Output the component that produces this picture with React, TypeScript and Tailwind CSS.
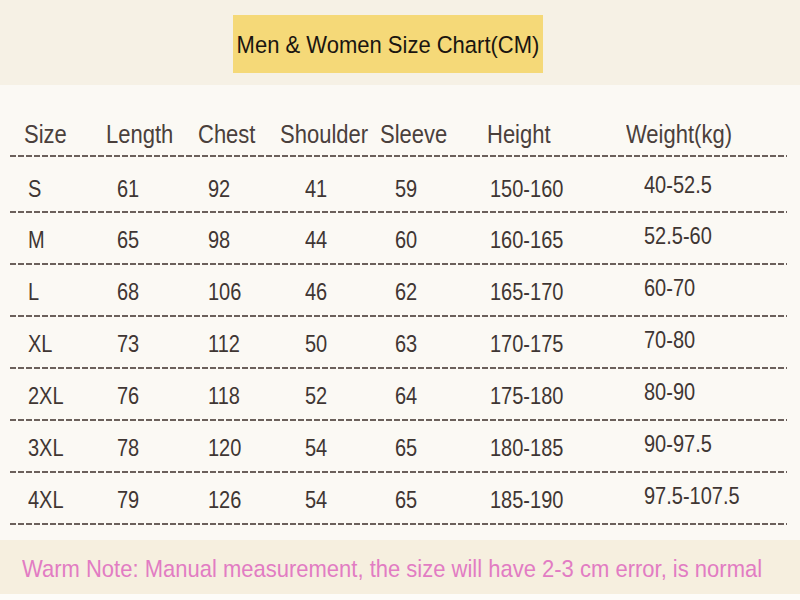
import React from "react";

const rows = [
  ["S", "61", "92", "41", "59", "150-160", "40-52.5"],
  ["M", "65", "98", "44", "60", "160-165", "52.5-60"],
  ["L", "68", "106", "46", "62", "165-170", "60-70"],
  ["XL", "73", "112", "50", "63", "170-175", "70-80"],
  ["2XL", "76", "118", "52", "64", "175-180", "80-90"],
  ["3XL", "78", "120", "54", "65", "180-185", "90-97.5"],
  ["4XL", "79", "126", "54", "65", "185-190", "97.5-107.5"],
];

const widths = ["w-[89px]", "w-[91px]", "w-[97px]", "w-[90px]", "w-[95px]", "w-[154px]", ""];
const heads = ["Size", "Length", "Chest", "Shoulder", "Sleeve", "Height", "Weight(kg)"];
const headWidths = ["w-[82px]", "w-[92px]", "w-[82px]", "w-[100px]", "w-[107px]", "w-[139px]", ""];

function Dashes() {
  return (
    <div className="ml-[10px] mr-[13px] h-[2px] bg-[repeating-linear-gradient(90deg,#6b605b_0_6px,transparent_6px_8px)]" />
  );
}

function Row({ cells, first }: { cells: string[]; first?: boolean }) {
  return (
    <div
      className={`flex items-center pl-[28px] text-[20px] text-[#3f3633] ${
        first ? "h-[54px] pt-[10px]" : "h-[50px] pt-[4px]"
      }`}
    >
      {cells.map((c, i) => (
        <span
          key={i}
          className={`${widths[i]} scale-y-[1.15] origin-left ${i === 6 ? "-mt-[8px]" : ""}`}
        >
          {c}
        </span>
      ))}
    </div>
  );
}

export default function App() {
  return (
    <div className="w-[800px] h-[600px] flex flex-col bg-[#fbf9f4] font-['Liberation_Sans',Arial,sans-serif]">
      <div className="h-[85px] bg-[#f6f1e5] flex justify-center pt-[15px]">
        <div className="w-[310px] h-[58px] ml-[-24px] bg-[#f5d978] flex items-center justify-center text-[22px] text-[#1a1510]">
          <span className="scale-y-[1.08]">Men &amp; Women Size Chart(CM)</span>
        </div>
      </div>

      <div className="flex flex-col">
        <div className="flex items-center h-[70px] pt-[28px] pl-[24px] text-[22px] text-[#4a403c]">
          {heads.map((h, i) => (
            <span key={h} className={`${headWidths[i]} scale-y-[1.14]`}>
              {h}
            </span>
          ))}
        </div>
        <Dashes />
        {rows.map((r, i) => (
          <React.Fragment key={r[0]}>
            <Row cells={r} first={i === 0} />
            <Dashes />
          </React.Fragment>
        ))}
      </div>

      <div className="mt-[15px] h-[54px] bg-[#f6efdf] flex items-center pl-[22px] whitespace-nowrap text-[22px] text-[#e27cc3]">
        <span className="scale-y-[1.1] pt-[2px]">
          Warm Note: Manual measurement, the size will have 2-3 cm error, is normal
        </span>
      </div>
      <div className="flex-1 bg-[#fdfcf9]" />
    </div>
  );
}
